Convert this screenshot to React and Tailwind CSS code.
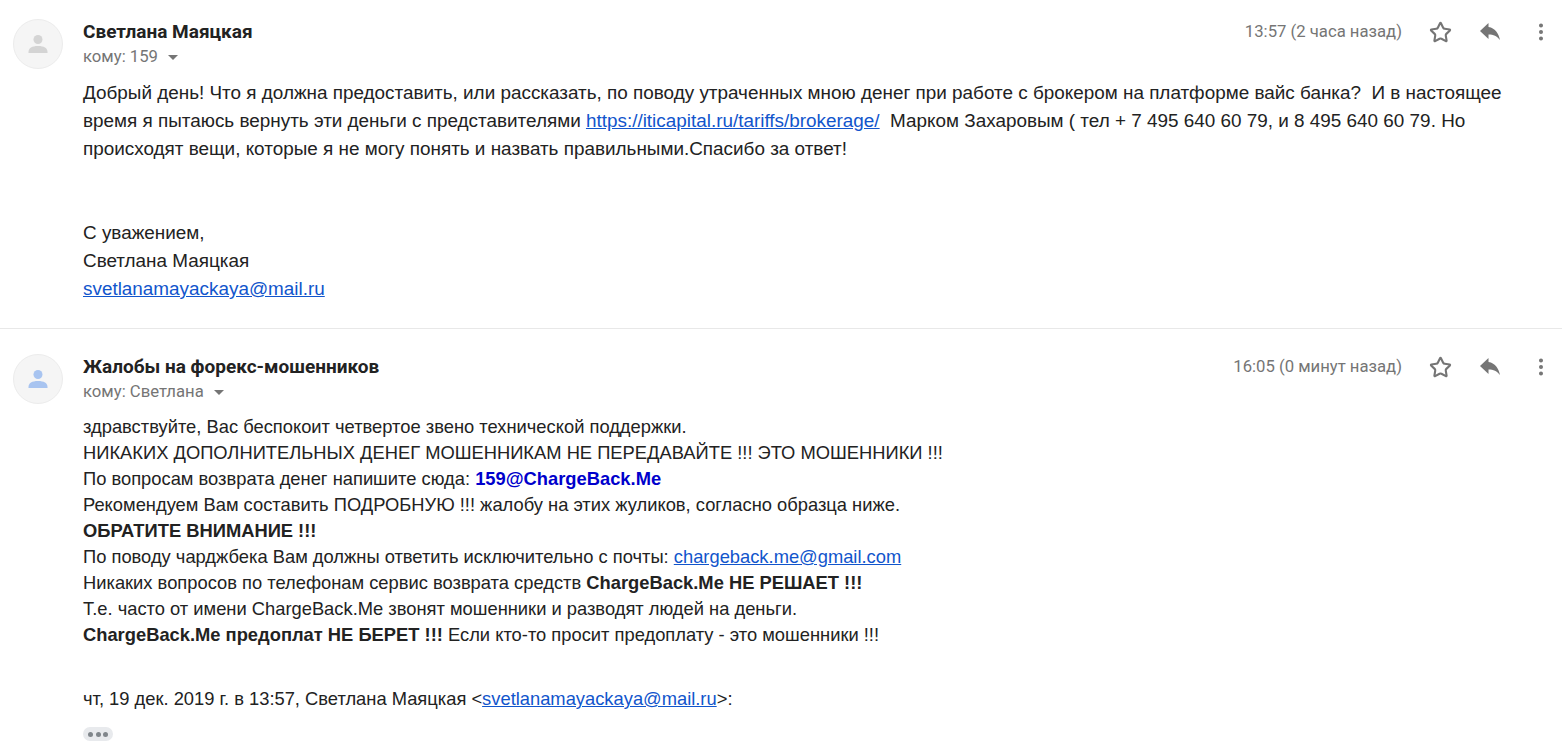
import { Star, MoreVertical } from "lucide-react";

const Avatar = ({ color }) => (
  <div className="w-[50px] h-[50px] shrink-0 rounded-full bg-[#f5f5f5] border border-[#ececec] flex items-center justify-center">
    <svg width="22" height="22" viewBox="0 0 22 22" fill={color}>
      <circle cx="11" cy="6.5" r="4.5" />
      <path d="M1.5 19c0-4 3.5-6 9.5-6s9.5 2 9.5 6v1h-19z" />
    </svg>
  </div>
);

const Actions = ({ time }) => (
  <div className="flex items-center h-6 mt-[1px] text-[#757575]">
    <span className="text-[16.700px] font-['Roboto',sans-serif] mr-[27px]">{time}</span>
    <Star size={23} strokeWidth={2.2} className="mr-[27px]" />
    <svg width="24" height="20" viewBox="0 0 24 20" fill="currentColor" className="mr-[27px]">
      <path d="M9.5 5V1L1 9l8.5 8v-4.5c5 0 8.5 1.600 11.500 5.500C20 12.500 16.500 6 9.500 5z" />
    </svg>
    <MoreVertical size={22} strokeWidth={2.4} className="mr-[10px]" />
  </div>
);

const Header = ({ name, to, time, avatar }) => (
  <div className="flex">
    <div className="ml-[13px] mr-5 mt-[19px]">
      <Avatar color={avatar} />
    </div>
    <div className="flex-1 flex justify-between pt-[19px]">
      <div>
        <div className="h-6 leading-6 mt-[1px] text-[19px] font-bold text-[#222] font-['Roboto',sans-serif]">{name}</div>
        <div className="h-[26px] flex items-center text-[16.700px] text-[#757575] font-['Roboto',sans-serif]">
          {to}
          <span className="ml-[10px] mt-[1px] w-0 h-0 border-x-[5.500px] border-x-transparent border-t-[5.500px] border-t-[#757575]"></span>
        </div>
      </div>
      <Actions time={time} />
    </div>
  </div>
);

const linkClass = "text-[#15c] underline";

export default function App() {
  return (
    <div className="w-[1562px] h-[748px] overflow-hidden bg-white text-[#222] font-['Liberation_Sans',Arial,sans-serif]">
      <section className="h-[329px] border-b border-[#e8e8e8]">
        <Header name="Светлана Маяцкая" to="кому: 159" time="13:57 (2 часа назад)" avatar="#d4d4d4" />
        <div className="ml-[83px] mt-[9px] text-[18.900px] leading-[28px] whitespace-pre">
          <div>Добрый день! Что я должна предоставить, или рассказать, по поводу утраченных мною денег при работе с брокером на платформе вайс банка?  И в настоящее</div>
          <div>
            время я пытаюсь вернуть эти деньги с представителями <a className={linkClass}>https://iticapital.ru/tariffs/brokerage/</a>  Марком Захаровым ( тел + 7 495 640 60 79, и 8 495 640 60 79. Но
          </div>
          <div>происходят вещи, которые я не могу понять и назвать правильными.Спасибо за ответ!</div>
          <div className="h-14"></div>
          <div>С уважением,</div>
          <div>Светлана Маяцкая</div>
          <a className={linkClass}>svetlanamayackaya@mail.ru</a>
        </div>
      </section>

      <section>
        <div className="mt-[6px]">
          <Header name="Жалобы на форекс-мошенников" to="кому: Светлана" time="16:05 (0 минут назад)" avatar="#a8c4f0" />
        </div>
        <div className="ml-[83px] mt-[9px] text-[18.330px] leading-[26px] whitespace-pre">
          <div>здравствуйте, Вас беспокоит четвертое звено технической поддержки.</div>
          <div>НИКАКИХ ДОПОЛНИТЕЛЬНЫХ ДЕНЕГ МОШЕННИКАМ НЕ ПЕРЕДАВАЙТЕ !!! ЭТО МОШЕННИКИ !!!</div>
          <div>
            По вопросам возврата денег напишите сюда: <b className="text-[#0000cc]">159@ChargeBack.Me</b>
          </div>
          <div>Рекомендуем Вам составить ПОДРОБНУЮ !!! жалобу на этих жуликов, согласно образца ниже.</div>
          <div className="font-bold">ОБРАТИТЕ ВНИМАНИЕ !!!</div>
          <div>
            По поводу чарджбека Вам должны ответить исключительно с почты: <a className={linkClass}>chargeback.me@gmail.com</a>
          </div>
          <div>
            Никаких вопросов по телефонам сервис возврата средств <b>ChargeBack.Me НЕ РЕШАЕТ !!!</b>
          </div>
          <div>Т.е. часто от имени ChargeBack.Me звонят мошенники и разводят людей на деньги.</div>
          <div>
            <b>ChargeBack.Me предоплат НЕ БЕРЕТ !!!</b> Если кто-то просит предоплату - это мошенники !!!
          </div>
          <div className="mt-[38px]">
            чт, 19 дек. 2019 г. в 13:57, Светлана Маяцкая &lt;<a className={linkClass}>svetlanamayackaya@mail.ru</a>&gt;:
          </div>
          <div className="mt-[15px] w-[30px] h-[14px] rounded-full bg-[#e8eaed] flex items-center justify-center gap-[2.500px]">
            <span className="w-[5px] h-[5px] rounded-full bg-[#80868b]"></span>
            <span className="w-[5px] h-[5px] rounded-full bg-[#80868b]"></span>
            <span className="w-[5px] h-[5px] rounded-full bg-[#80868b]"></span>
          </div>
        </div>
      </section>
    </div>
  );
}
